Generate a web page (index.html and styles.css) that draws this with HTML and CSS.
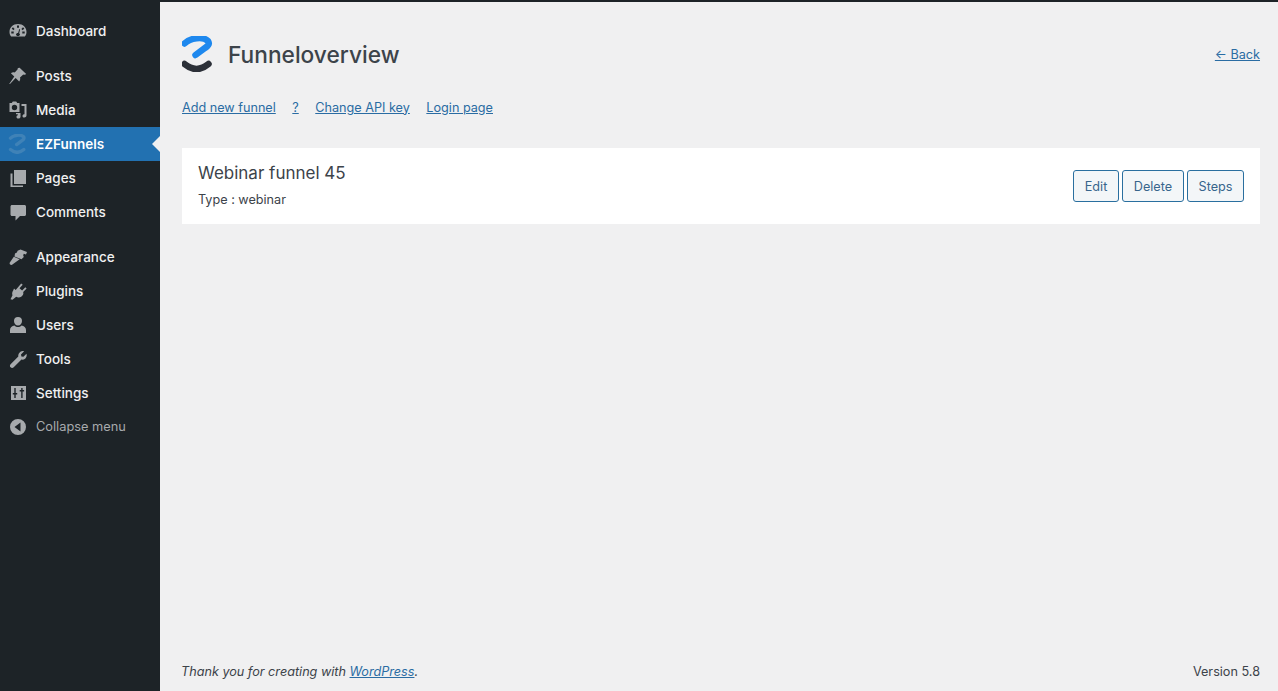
FILE: index.html
```html
<!DOCTYPE html>
<html lang="en">
<head>
    <meta charset="UTF-8">
    <title>Funneloverview</title>
    <link rel="stylesheet" href="styles.css">
</head>
<body>
    <div class="topbar"></div>
    <div class="wrap">
        <nav class="sidebar">
            <ul class="menu">
                <li class="menu-item gap-after">
                    <svg class="icon" viewBox="0 0 20 20"><path fill-rule="evenodd" d="M10 3C5 3 1.500 6.500 1.500 11c0 1.800.6 3.300 1.600 4.500h13.800c1-1.200 1.600-2.700 1.600-4.500 0-4.500-3.500-8-8.500-8zM9 4.500h2v2.300H9zM5 6.300l1.600 1.600-1.300 1.300-1.600-1.600zm10 0l1.300 1.300-1.600 1.600-1.300-1.300zM3.300 10.500h2.400v2H3.300zm11 0h2.400v2h-2.400zM11.300 8l.8.400-.9 3.800c.5.400.8.900.8 1.400 0 .9-.8 1.500-2 1.500s-2-.6-2-1.500c0-1 .9-1.700 2.100-1.700z"/></svg>
                    <span>Dashboard</span>
                </li>
                <li class="menu-item">
                    <svg class="icon" viewBox="0 0 20 20"><path d="M11.600 1.800l6.600 6.300c-.8.800-2 .8-2.900.5l-3.300 3c.5 1.300.2 2.800-.8 3.800L7.600 11.900 2 18l-.8-.1L6.300 10.500 2.900 7.300c1-1 2.500-1.300 3.800-.8l3-3.300c-.2-.6 0-1.500 1.900-1.400z"/></svg>
                    <span>Posts</span>
                </li>
                <li class="menu-item">
                    <svg class="icon" viewBox="0 0 20 20"><path fill-rule="evenodd" d="M1.500 3h2.300l1-1.500h3.400l1 1.500h2.300v9h-10zM6.500 4.800a2.700 2.700 0 1 0 0 5.400 2.700 2.700 0 0 0 0-5.400zM13.500 4h5v11.500c0 1.200-1 2-2.200 2-1 0-1.800-.7-1.800-1.600 0-1 .9-1.600 2-1.600V6h-3zM8 13h4.500v3.700c0 1-.9 1.800-2 1.800s-2-.7-2-1.600c0-.8.500-1.400 1.300-1.600v-1H8z"/></svg>
                    <span>Media</span>
                </li>
                <li class="menu-item current">
                    <svg class="icon" viewBox="2 2 32 36"><path d="M4.500 9.500C10 4 23 2 28 7c2 3 0 5-3 7l-9.500 7"/><path d="M4.500 30Q16.500 40 28.500 30"/></svg>
                    <span>EZFunnels</span>
                </li>
                <li class="menu-item">
                    <svg class="icon" viewBox="0 0 20 20"><path d="M6 2h12v14H6zM2.500 5.500H4.500v12h10.500v1.500H2.500z"/></svg>
                    <span>Pages</span>
                </li>
                <li class="menu-item gap-after">
                    <svg class="icon" viewBox="0 0 20 20"><path d="M4 3h12.500c.8 0 1.500.7 1.500 1.500v8c0 .8-.7 1.500-1.500 1.500H12l-4.500 4.500V14H4c-.8 0-1.500-.7-1.500-1.500v-8C2.500 3.700 3.200 3 4 3z"/></svg>
                    <span>Comments</span>
                </li>
                <li class="menu-item">
                    <svg class="icon" viewBox="0 0 20 20"><path d="M12.500 2.500L19 5l-1 2.500-2.200-.8-.6 1.500.6 1.700-2.300 2.300-7-2.800.5-2.900 1.900-.9.700-1.800zM5.800 9.800l5.900 2.400-8 5.800-1.700-.5-.5-1.500z"/></svg>
                    <span>Appearance</span>
                </li>
                <li class="menu-item">
                    <svg class="icon" viewBox="0 0 20 20"><path d="M13.200 2.500l1.500 1.300-3.200 3.400 2.600 2.400 3.200-3.300 1.300 1.300-3.400 3.500c.6 2-.4 3.600-2 4.600-1.500.9-3.500.9-5 0l-3.700 3-2-.5 2-4c-.7-1.700-.3-3.500.8-5L6 7.500l1.700 1.600z"/></svg>
                    <span>Plugins</span>
                </li>
                <li class="menu-item">
                    <svg class="icon" viewBox="0 0 20 20"><path d="M10 2a4 4 0 0 1 4 4c0 2.400-1.700 4.500-4 4.500S6 8.400 6 6a4 4 0 0 1 4-4zM6.500 10.500c1 1 2.200 1.500 3.500 1.500s2.500-.5 3.500-1.500c2.500.5 4.500 2 4.500 4.500v3H2v-3c0-2.500 2-4 4.500-4.500z"/></svg>
                    <span>Users</span>
                </li>
                <li class="menu-item">
                    <svg class="icon" viewBox="0 0 20 20"><path d="M14.500 2c.6 0 1.100.1 1.600.3L13 5.400l.4 2 2 .4 3.100-3c.5 1.600.1 3.400-1.100 4.600-1.100 1-2.500 1.400-3.900 1.200L5.700 18.300c-.8.900-2.300.9-3.100 0-.9-.8-.9-2.300 0-3.100l7.700-7.800c-.2-1.300.2-2.700 1.200-3.700.8-.9 1.900-1.700 3-1.700z"/></svg>
                    <span>Tools</span>
                </li>
                <li class="menu-item">
                    <svg class="icon" viewBox="0 0 20 20"><path fill-rule="evenodd" d="M3 3h15v14H3zM6.300 5v5H4.800v1.500h1.500V15h1.400v-3.500h1.500V10H7.700V5zm6.900 0v2h-1.500v1.500h1.500V15h1.400V8.500h1.500V7h-1.500V5z"/></svg>
                    <span>Settings</span>
                </li>
                <li class="menu-item collapse">
                    <svg class="icon" viewBox="0 0 20 20"><path fill-rule="evenodd" d="M10 2a8 8 0 1 1 0 16 8 8 0 0 1 0-16zm2.500 3.500L6.500 10l6 4.500z"/></svg>
                    <span>Collapse menu</span>
                </li>
            </ul>
        </nav>
        <main class="content">
            <header class="page-head">
                <div class="title-group">
                    <svg class="logo" viewBox="2 2 32 36"><path class="logo-top" d="M4.500 9.500C10 4 23 2 28 7c2 3 0 5-3 7l-9.500 7"/><path class="logo-bottom" d="M4.500 30Q16.500 40 28.500 30"/></svg>
                    <h1>Funneloverview</h1>
                </div>
                <a class="back" href="#">← Back</a>
            </header>
            <div class="links">
                <a href="#">Add new funnel</a>
                <a href="#">?</a>
                <a href="#">Change API key</a>
                <a href="#">Login page</a>
            </div>
            <section class="card">
                <div class="card-text">
                    <h2>Webinar funnel 45</h2>
                    <p>Type : webinar</p>
                </div>
                <div class="actions">
                    <a class="btn" href="#">Edit</a>
                    <a class="btn" href="#">Delete</a>
                    <a class="btn" href="#">Steps</a>
                </div>
            </section>
            <footer class="foot">
                <em>Thank you for creating with <a href="#">WordPress</a>.</em>
                <span>Version 5.8</span>
            </footer>
        </main>
    </div>
</body>
</html>
```
FILE: styles.css
```css
*, *::before, *::after {
    box-sizing: border-box;
}
html, body { height: 100%; }
body {
    margin: 0;
    display: flex;
    flex-direction: column;
    background: #f0f0f1;
    color: #3c434a;
    font-family: Inter, "Liberation Sans", sans-serif;
    font-size: 12.65px;
    overflow: hidden;
}
a { color: #2a6ca3; }
.topbar { height: 2px; background: #1d2327; flex: none; }
.wrap { display: flex; flex: 1; min-height: 0; }

.sidebar { width: 160px; flex: none; background: #1d2327; padding-top: 12px; }
.menu { list-style: none; margin: 0; padding: 0; }
.menu-item {
    position: relative;
    display: flex;
    align-items: center;
    height: 34px;
    padding-left: 8px;
    color: #f0f0f1;
    font-size: 13.5px;
    font-weight: 500;
}
.menu-item span { margin-left: 8px; margin-bottom: 1px; }
.gap-after { margin-bottom: 11px; }
.icon { width: 20px; height: 20px; fill: #a7aaad; flex: none; }
.current { background: #2271b1; color: #fff; font-weight: 600; }
.current::after {
    content: "";
    position: absolute;
    right: 0;
    top: 50%;
    margin-top: -8px;
    border: 8px solid transparent;
    border-right-color: #f0f0f1;
    border-left-width: 0;
}
.current .icon { fill: none; stroke: #3f82b7; stroke-width: 6; stroke-linecap: round; }
.collapse { color: #a7aaad; font-size: 12.8px; font-weight: 400; height: 33px; }

.content { flex: 1; min-width: 0; display: flex; flex-direction: column; padding: 34px 18px 0 22px; }
.page-head { display: flex; align-items: center; justify-content: space-between; height: 36px; margin-bottom: 26px; }
.title-group { display: flex; align-items: center; gap: 14px; }
.logo { width: 32px; height: 36px; fill: none; stroke-width: 6.500; stroke-linecap: round; }
.logo-top { stroke: #1e88ee; }
.logo-bottom { stroke: #2c3038; }
h1 { margin: 0; font-size: 22.7px; font-weight: 500; color: #3c434a; }
.links { display: flex; gap: 16.500px; height: 18px; align-items: center; margin-bottom: 32px; }
.card {
    display: flex;
    justify-content: space-between;
    align-items: center;
    height: 76px;
    background: #fff;
    padding: 0 16px;
}
.card-text { align-self: flex-start; padding-top: 15px; }
h2 { margin: 0 0 9px; font-size: 17px; font-weight: 400; color: #3c434a; }
.card p { margin: 0; }
.actions { display: flex; gap: 3.500px; }
.btn {
    display: flex;
    align-items: center;
    height: 32px;
    padding: 0 10.500px;
    border: 1px solid #2a6f9f;
    border-radius: 3px;
    background: #f3f6f8;
    color: #37658c;
    text-decoration: none;
}
.foot { margin: auto 0 0 -1px; display: flex; justify-content: space-between; align-items: center; height: 40px; }
```
